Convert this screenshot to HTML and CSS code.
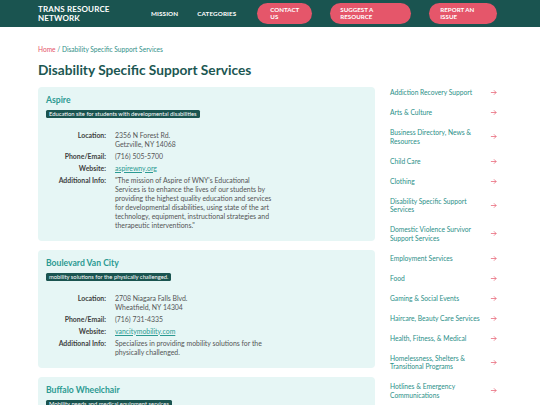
FILE: index.html
```
<!DOCTYPE html>
<html>
<head>
<meta charset="utf-8">
<link rel="stylesheet" href="styles.css">
</head>
<body>
<header class="topbar">
  <div class="logo">TRANS RESOURCE<br>NETWORK</div>
  <nav class="nav">
    <a class="nav-link">MISSION</a>
    <a class="nav-link">CATEGORIES</a>
  </nav>
  <div class="actions">
    <a class="btn btn-contact">CONTACT US</a>
    <a class="btn btn-suggest">SUGGEST A RESOURCE</a>
    <a class="btn btn-report">REPORT AN ISSUE</a>
  </div>
</header>
<main class="page">
  <div class="crumbs"><a class="crumb-home">Home</a> / Disability Specific Support Services</div>
  <h1 class="title">Disability Specific Support Services</h1>
  <div class="layout">
    <section class="cards">
      <article class="card">
        <h2 class="card-title">Aspire</h2>
        <span class="badge">Education site for students with developmental disabilities</span>
        <dl class="info">
          <dt>Location:</dt><dd>2356 N Forest Rd.<br>Getzville, NY 14068</dd>
          <dt>Phone/Email:</dt><dd>(716) 505-5700</dd>
          <dt>Website:</dt><dd><a class="link">aspirewny.org</a></dd>
          <dt>Additional Info:</dt><dd>"The mission of Aspire of WNY's Educational Services is to enhance the lives of our students by providing the highest quality education and services for developmental disabilities, using state of the art technology, equipment, instructional strategies and therapeutic interventions."</dd>
        </dl>
      </article>
      <article class="card">
        <h2 class="card-title">Boulevard Van City</h2>
        <span class="badge">mobility solutions for the physically challenged.</span>
        <dl class="info">
          <dt>Location:</dt><dd>2708 Niagara Falls Blvd.<br>Wheatfield, NY 14304</dd>
          <dt>Phone/Email:</dt><dd>(716) 731-4335</dd>
          <dt>Website:</dt><dd><a class="link">vancitymobility.com</a></dd>
          <dt>Additional Info:</dt><dd>Specializes in providing mobility solutions for the physically challenged.</dd>
        </dl>
      </article>
      <article class="card">
        <h2 class="card-title">Buffalo Wheelchair</h2>
        <span class="badge">Mobility needs and medical equipment services</span>
      </article>
    </section>
    <aside class="sidebar">
      <ul class="cat-list">
        <li class="cat"><span class="cat-name">Addiction Recovery Support</span><svg class="arrow" viewBox="0 0 8 8"><path d="M1 4H7M4.5 1.5L7 4L4.5 6.5"/></svg></li>
        <li class="cat"><span class="cat-name">Arts &amp; Culture</span><svg class="arrow" viewBox="0 0 8 8"><path d="M1 4H7M4.5 1.5L7 4L4.5 6.5"/></svg></li>
        <li class="cat"><span class="cat-name">Business Directory, News &amp; Resources</span><svg class="arrow" viewBox="0 0 8 8"><path d="M1 4H7M4.5 1.5L7 4L4.5 6.5"/></svg></li>
        <li class="cat"><span class="cat-name">Child Care</span><svg class="arrow" viewBox="0 0 8 8"><path d="M1 4H7M4.5 1.5L7 4L4.5 6.5"/></svg></li>
        <li class="cat"><span class="cat-name">Clothing</span><svg class="arrow" viewBox="0 0 8 8"><path d="M1 4H7M4.5 1.5L7 4L4.5 6.5"/></svg></li>
        <li class="cat"><span class="cat-name">Disability Specific Support Services</span><svg class="arrow" viewBox="0 0 8 8"><path d="M1 4H7M4.5 1.5L7 4L4.5 6.5"/></svg></li>
        <li class="cat"><span class="cat-name">Domestic Violence Survivor Support Services</span><svg class="arrow" viewBox="0 0 8 8"><path d="M1 4H7M4.5 1.5L7 4L4.5 6.5"/></svg></li>
        <li class="cat"><span class="cat-name">Employment Services</span><svg class="arrow" viewBox="0 0 8 8"><path d="M1 4H7M4.5 1.5L7 4L4.5 6.5"/></svg></li>
        <li class="cat"><span class="cat-name">Food</span><svg class="arrow" viewBox="0 0 8 8"><path d="M1 4H7M4.5 1.5L7 4L4.5 6.5"/></svg></li>
        <li class="cat"><span class="cat-name">Gaming &amp; Social Events</span><svg class="arrow" viewBox="0 0 8 8"><path d="M1 4H7M4.5 1.5L7 4L4.5 6.5"/></svg></li>
        <li class="cat"><span class="cat-name">Haircare, Beauty Care Services</span><svg class="arrow" viewBox="0 0 8 8"><path d="M1 4H7M4.5 1.5L7 4L4.5 6.5"/></svg></li>
        <li class="cat"><span class="cat-name">Health, Fitness, &amp; Medical</span><svg class="arrow" viewBox="0 0 8 8"><path d="M1 4H7M4.5 1.5L7 4L4.5 6.5"/></svg></li>
        <li class="cat"><span class="cat-name">Homelessness, Shelters &amp; Transitional Programs</span><svg class="arrow" viewBox="0 0 8 8"><path d="M1 4H7M4.5 1.5L7 4L4.5 6.5"/></svg></li>
        <li class="cat"><span class="cat-name">Hotlines &amp; Emergency Communications</span><svg class="arrow" viewBox="0 0 8 8"><path d="M1 4H7M4.5 1.5L7 4L4.5 6.5"/></svg></li>
      </ul>
    </aside>
  </div>
</main>
</body>
</html>
```
FILE: styles.css
```
* { box-sizing: border-box; }
html, body { margin: 0; padding: 0; }
body {
  font-family: Lato, "Open Sans", sans-serif;
  background: #ffffff;
  color: #444;
  width: 540px;
  overflow: hidden;
}
a { text-decoration: none; color: inherit; }

.topbar {
  height: 27px;
  background: #1a5450;
  display: flex;
  align-items: center;
  padding-left: 38px;
}
.logo {
  color: #fff;
  font-weight: 700;
  font-size: 8px;
  line-height: 8.5px;
  letter-spacing: 0.15px;
  width: 113px;
}
.nav {
  display: flex;
  gap: 19px;
}
.nav-link {
  color: #fff;
  font-size: 6.3px;
  font-weight: 700;
  letter-spacing: 0.1px;
}
.actions {
  display: flex;
  gap: 18px;
  margin-left: 21px;
}
.btn {
  height: 21px;
  border-radius: 11px;
  background: #e5566a;
  color: #fff;
  font-size: 6.2px;
  font-weight: 700;
  line-height: 6.5px;
  padding: 0 6px 0 12px;
  display: flex;
  align-items: center;
}
.btn-contact { width: 55px; padding-left: 13px; }
.btn-suggest { width: 81px; padding-left: 10px; padding-right: 30px; }
.btn-report { width: 68px; padding-left: 11px; padding-right: 18px; }

.page {
  padding: 18px 40px 0 38px;
}
.crumbs {
  font-size: 6.6px;
  line-height: 9px;
  color: #2f8f88;
}
.crumb-home { color: #e5566a; }
.title {
  margin: 6.5px 0 0;
  font-size: 13.7px;
  line-height: 18px;
  font-weight: 700;
  color: #1c5752;
}
.layout {
  display: flex;
  gap: 5px;
  margin-top: 4px;
}
.cards {
  width: 337px;
  padding-top: 4px;
  display: flex;
  flex-direction: column;
  gap: 9px;
}
.card {
  background: #e6f6f5;
  border-radius: 4px;
  padding: 8.5px 8px 11px;
}
.card-title {
  margin: 0;
  font-size: 8.6px;
  line-height: 11px;
  font-weight: 700;
  color: #2b9a92;
}
.badge {
  display: block;
  width: fit-content;
  margin-top: 3.5px;
  height: 8px;
  line-height: 8px;
  padding: 0 3px;
  border-radius: 1.5px;
  background: #1a5450;
  color: #fff;
  font-size: 5.8px;
  white-space: nowrap;
}
.info {
  margin: 13px 0 0;
  display: grid;
  grid-template-columns: 60px 157px;
  column-gap: 9px;
  row-gap: 3px;
  font-size: 6.9px;
  line-height: 9px;
}
.info dt {
  text-align: right;
  font-weight: 700;
  color: #3f3f3f;
}
.info dd {
  margin: 0;
  color: #555;
}
.link {
  color: #2b9a92;
  text-decoration: underline;
}

.sidebar {
  width: 120px;
  padding-left: 10px;
}
.cat-list {
  list-style: none;
  margin: 0;
  padding: 0;
}
.cat {
  display: flex;
  align-items: center;
  justify-content: space-between;
  padding: 5.75px 0;
  font-size: 6.7px;
  line-height: 8.5px;
  color: #2b8f88;
}
.cat-name { width: 95px; }
.arrow {
  width: 7px;
  height: 7px;
  fill: none;
  stroke: #e5566a;
  stroke-width: 0.8;
  margin-right: 3px;
}
```
